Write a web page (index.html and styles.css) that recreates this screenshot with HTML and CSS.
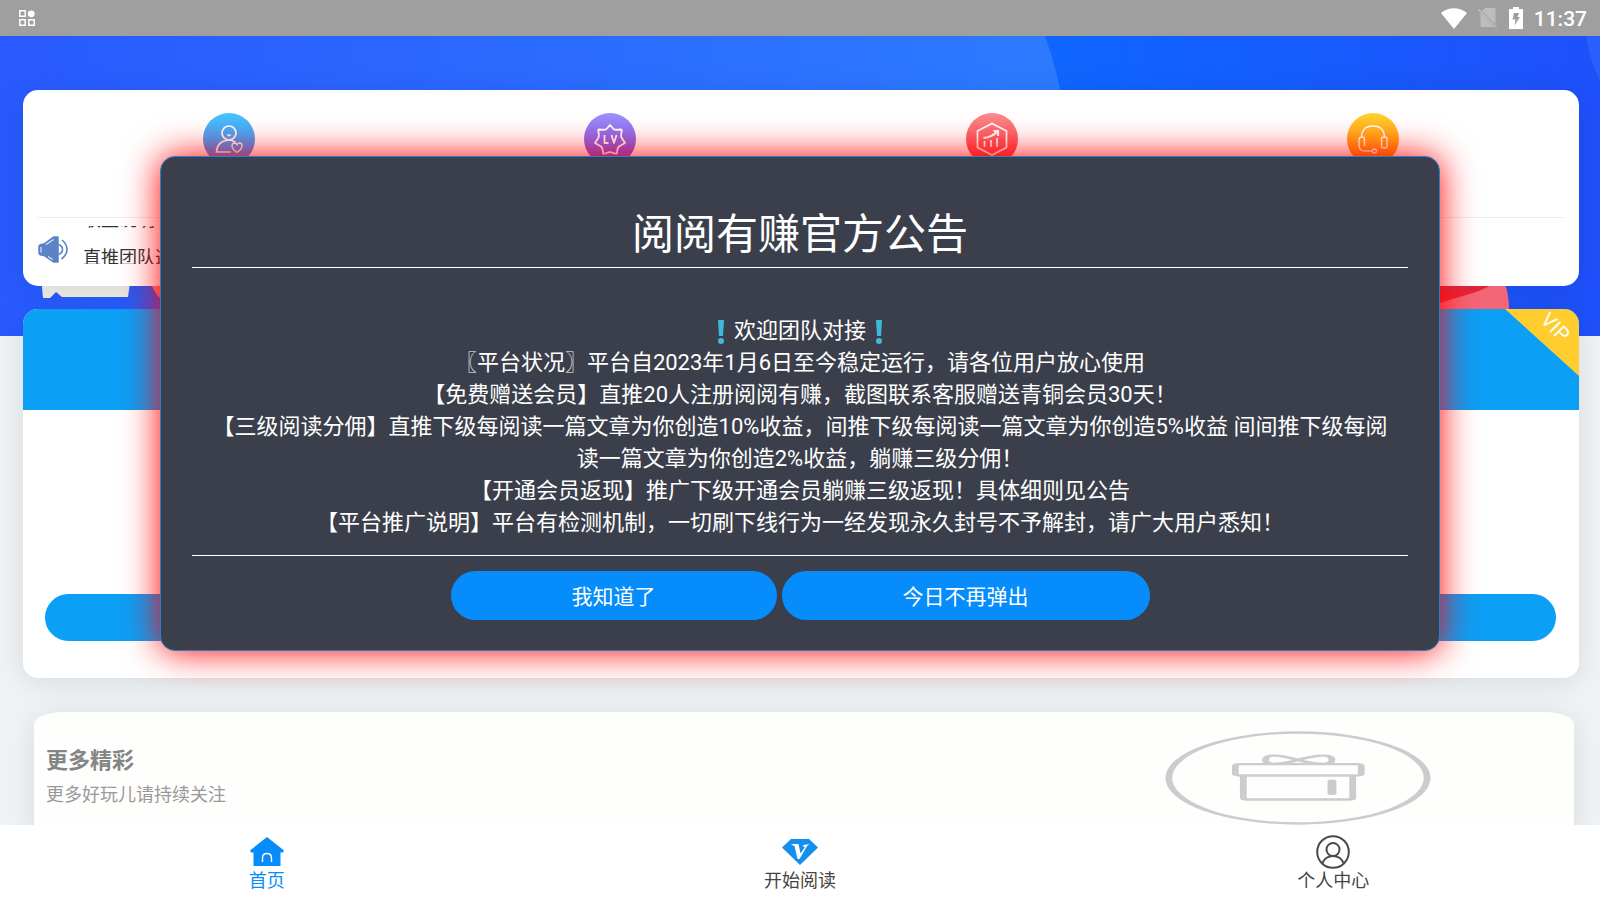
FILE: index.html
```
<!DOCTYPE html>
<html lang="zh-CN">
<head>
    <meta charset="utf-8">
    <meta name="viewport" content="width=device-width, initial-scale=1">
    <title>阅阅有赚</title>
    <link rel="stylesheet" href="styles.css">
</head>

<body>
    <header class="status-bar">
        <svg class="status-app" viewBox="0 0 16 16" width="16" height="16" fill="none" stroke="#fff" stroke-width="1.5">
            <path d="M.8.8h5.4v5.4H.8zM.8 9.8h5.4v5.4H.8zM9.8 9.8h5.4v5.4H9.8z"/>
            <circle cx="12.2" cy="3.8" r="3.4" fill="#fff" stroke="none"/>
        </svg>
        <div class="status-right">
            <svg viewBox="0 0 26 21" width="26" height="21"><path fill="#fff" d="M13 21 0 5C7-1.500 19-1.500 26 5z"/></svg>
            <svg viewBox="0 0 20 20" width="20" height="20">
                <path fill="#bdbdbd" d="M7 0h9q1.500 0 1.500 1.500V16L4 3zM2.500 5 16 19H4q-1.500 0-1.500-1.500z"/>
                <path stroke="#bdbdbd" stroke-width="1.600" d="M.5 1.500 18.500 19.500"/>
            </svg>
            <svg viewBox="0 0 14 22" width="14" height="22">
                <path fill="#fff" d="M4 0h6v2h4v20H0V2h4z"/>
                <path fill="#9e9e9e" d="M5 6h5L8.500 10H11L5.500 18.500 6.500 12.500H3.500z"/>
            </svg>
            <span class="clock">11:37</span>
        </div>
    </header>

    <main class="page">
        <svg class="hero" viewBox="0 0 1600 300" preserveAspectRatio="none">
            <defs>
                <linearGradient id="heroLeft"><stop offset="0" stop-color="#295aff"/><stop offset="1" stop-color="#2d7bff"/></linearGradient>
                <linearGradient id="heroRight" gradientUnits="userSpaceOnUse" x1="1050" x2="1600"><stop offset="0" stop-color="#0f66ff"/><stop offset="1" stop-color="#1f50fb"/></linearGradient>
            </defs>
            <rect width="1600" height="300" fill="url(#heroRight)"/>
            <path fill="url(#heroLeft)" d="M0 0H1045Q1070 70 1070 150T1040 300H0z"/>
            <path fill="#285fff" d="M1586 0h14v45Q1590 25 1586 0z"/>
            <path fill="#f0f0ea" d="M41 240h90l-3 21H62l-6-5-6 6h-7z"/>
            <path fill="#ff8d8d" d="M150 240h60v25h-45q-9-3-15-20z"/>
            <path fill="#ff6b7c" d="M1420 240h82q7 15 7 33h-89z"/>
            <path fill="#f0283c" d="M1420 240h82q-10 12-36 19l-46 14z"/>
            <path fill="#d93248" d="M1420 240h82q-16 10-50 14l-20 4z"/>
        </svg>

        <section class="card menu-card">
            <nav class="menu">
                <a href="#" class="menu-item blue" aria-label="邀请好友">
                    <svg viewBox="0 0 52 52" fill="none" stroke="#fff" stroke-width="1.700">
                        <circle cx="26" cy="20" r="7"/><path d="M23.500 21.500h5q-2.500 4-5 0z" fill="#fff" stroke="none"/>
                        <path stroke-linecap="round" d="M32 29q-3-2-6-2-12 1-12.500 12H27"/>
                        <path d="M34 39.500q-5-3.500-5-6.500 0-3 2.500-3 1.500 0 2.500 1.800 1-1.800 2.500-1.800 2.500 0 2.500 3 0 3-5 6.500z" stroke-width="1.300"/>
                    </svg>
                </a>
                <a href="#" class="menu-item purple" aria-label="会员等级">
                    <svg viewBox="0 0 52 52" fill="none" stroke="#fff" stroke-width="1.800" stroke-linejoin="round">
                        <path d="M26 12l4 4.500q1 .5 7 0 1 0 .7 1.500-1 5-.2 6.500l3.500 5.500-6 3.500q-2 2-2 7-2 .5-4-.7-3-1.300-6 0-2 1.200-4 .7 0-5-2-7l-6-3.500 3.500-5.500q.8-1.500-.2-6.500-.3-1.500.7-1.500 6 .5 7 0z"/>
                        <path d="M20.500 22v8h4M27.500 22l2.500 8 2.500-8"/>
                    </svg>
                </a>
                <a href="#" class="menu-item red" aria-label="收益排行">
                    <svg viewBox="0 0 52 52" fill="none" stroke="#fff" stroke-width="1.700">
                        <path d="M26 10.500 40.500 18v16.500L26 42 11.500 34.500V18z"/>
                        <path d="M18.500 28v6M25 27v7M31 25v9"/>
                        <path stroke-width="2.200" d="M17.500 25q9-1 13-6M27.500 18h4.500v5"/>
                    </svg>
                </a>
                <a href="#" class="menu-item orange" aria-label="联系客服">
                    <svg viewBox="0 0 52 52" fill="none" stroke="#fff" stroke-width="1.400">
                        <path d="M14.500 25q0-12 11.500-12t11.500 12"/>
                        <rect x="34.500" y="24" width="5.500" height="11" rx="2"/>
                        <path d="M17.500 33v-7q0-2-2.500-2-3 0-3 3v5q0 6 6 6h7"/>
                        <circle cx="27.500" cy="38" r="2"/>
                    </svg>
                </a>
            </nav>
            <div class="notice">
                <svg class="speaker" viewBox="0 0 30 28" width="30" height="28" fill="none" stroke="#5b83c6">
                    <path fill="#5b83c6" stroke-width="1.500" stroke-linejoin="round" d="M1 10.500q0-1.500 2-2L6 8 15.500 1H20V26h-4.500L6 19.500l-3-.5q-2-.5-2-2z"/>
                    <path stroke="#dfe8f6" stroke-width="1.200" d="M3 11v5.500M8 8.500 15.500 3.500M10 20.500l4.500 3"/>
                    <path stroke-width="1.600" d="M20.500 8.500q4 1.500 4 5t-4 5M24 4q5 4 5 9.500t-5.500 9.500"/>
                </svg>
                <ul class="ticker">
                    <li>收益说明</li>
                    <li>直推团队返现</li>
                </ul>
            </div>
        </section>

        <section class="card vip-card">
            <div class="vip-head">
                <span class="vip-corner"></span>
                <span class="vip-text">VIP</span>
            </div>
            <button type="button" class="vip-button" aria-label="开通会员"></button>
        </section>

        <section class="more-card">
            <div>
                <h2>更多精彩</h2>
                <p>更多好玩儿请持续关注</p>
            </div>
            <svg class="gift" viewBox="0 0 90 94" preserveAspectRatio="none" fill="none" stroke="#ccc" stroke-width="2.300">
                <ellipse cx="45" cy="47" rx="43.700" ry="45.500"/>
                <rect x="23.800" y="33.200" width="42.600" height="11.300" rx="1.500"/>
                <path d="M26.500 45v22q0 1.500 1.500 1.500h34q1.500 0 1.500-1.500V45"/>
                <path d="M45 29C40 25 34 21.500 34 29c0 6 6 4 11 0 5-4 11.500-7.500 11.500 0 0 6-6.500 4-11.500 0z"/>
                <path stroke-width="3" stroke-linecap="round" d="M56.500 50v12.500"/>
            </svg>
        </section>
    </main>

    <nav class="tab-bar">
        <a href="#" class="tab active">
            <svg viewBox="0 0 34 34" width="34" height="34">
                <path fill="#078cfb" d="M17 2 34 15.500 33 17.500H30.500V31h-27V17.500H1L0 15.500z"/>
                <path fill="none" stroke="#fff" stroke-width="1.400" d="M12.500 27v-4q0-4.500 4.500-4.500t4.500 4.500v4"/>
            </svg>
            <span>首页</span>
        </a>
        <a href="#" class="tab">
            <svg viewBox="0 0 36 34" width="36" height="34">
                <path fill="#158fee" d="M9 4h18l9 8.500L18 30 0 12.500z"/>
                <path fill="#fff" d="M9 9h7.500l2 9.500L23 12q-2-.5-2.500-1.500 2-1 7-1.500-2 1-3 3L17.500 24H15.500L12.500 11q-2-.5-3.500-2z"/>
            </svg>
            <span>开始阅读</span>
        </a>
        <a href="#" class="tab">
            <svg viewBox="0 0 34 34" width="34" height="34" fill="none" stroke="#4a4a4a" stroke-width="2">
                <circle cx="17" cy="17" r="15.800"/>
                <circle cx="17" cy="14.500" r="6.500"/>
                <path d="M6.500 28q3-7 10.500-7t10.500 7"/>
            </svg>
            <span>个人中心</span>
        </a>
    </nav>

    <div class="popup" role="dialog" aria-labelledby="popupTitle">
        <h1 id="popupTitle">阅阅有赚官方公告</h1>
        <div class="popup-text">
            <svg class="mark" viewBox="0 0 22 26"><path fill="#40b8dc" d="M8 1h6l-1 16H9z"/><circle cx="11" cy="22" r="3" fill="#40b8dc"/></svg>欢迎团队对接<svg class="mark" viewBox="0 0 22 26"><path fill="#40b8dc" d="M8 1h6l-1 16H9z"/><circle cx="11" cy="22" r="3" fill="#40b8dc"/></svg><br>
            〖平台状况〗平台自2023年1月6日至今稳定运行，请各位用户放心使用<br>
            【免费赠送会员】直推20人注册阅阅有赚，截图联系客服赠送青铜会员30天！<br>
            【三级阅读分佣】直推下级每阅读一篇文章为你创造10%收益，间推下级每阅读一篇文章为你创造5%收益 间间推下级每阅<br>读一篇文章为你创造2%收益，躺赚三级分佣！<br>
            【开通会员返现】推广下级开通会员躺赚三级返现！具体细则见公告<br>
            【平台推广说明】平台有检测机制，一切刷下线行为一经发现永久封号不予解封，请广大用户悉知！
        </div>
        <div class="popup-buttons">
            <button type="button">我知道了</button>
            <button type="button">今日不再弹出</button>
        </div>
    </div>
</body>

</html>
```
FILE: styles.css
```
* {
    box-sizing: border-box;
}

body {
    margin: 0;
    height: 100vh;
    display: flex;
    flex-direction: column;
    overflow: hidden;
    position: relative;
    background: #eff3f6;
    font-family: Roboto, "Noto Sans CJK SC", sans-serif;
    color: #333;
}

a {
    text-decoration: none;
}

.status-bar {
    height: 36px;
    flex: none;
    display: flex;
    align-items: center;
    justify-content: space-between;
    padding: 0 13px 0 19px;
    background: #9f9f9f;
}

.status-right {
    display: flex;
    align-items: center;
    gap: 11px;
}

.clock {
    color: #fff;
    font-size: 21px;
    line-height: 24px;
    font-weight: 500;
    padding-top: 2px;
}

.page {
    flex: 1;
    min-height: 0;
    position: relative;
    overflow: hidden;
    padding: 54px 21px 0 23px;
}

/* blue banner behind the cards */
.hero {
    position: absolute;
    top: 0;
    left: 0;
    width: 100%;
    height: 300px;
}

.card {
    position: relative;
    background: #fff;
    border-radius: 15px;
}

.card,
.more-card {
    box-shadow: 0 4px 30px rgba(0, 0, 0, 0.1);
}

.menu-card {
    padding: 23px 15px 0;
    margin-bottom: 23px;
}

.menu {
    display: grid;
    grid-template-columns: repeat(4, 1fr);
    justify-items: center;
    padding-bottom: 52px;
    border-bottom: 1px solid #eee;
}

.menu-item {
    width: 52px;
    height: 52px;
    border-radius: 50%;
}

.menu-item svg {
    display: block;
}

.blue {
    background: linear-gradient(#46c5ff, #3b7cf0);
}

.purple {
    background: linear-gradient(#9b92ff, #7040e0);
}

.red {
    background: linear-gradient(#fb8b8b, #f5323d);
}

.orange {
    background: linear-gradient(#ffd230, #ff7a00);
}

.notice {
    display: flex;
    align-items: flex-start;
    gap: 15px;
    height: 68px;
    padding-top: 8px;
}

.speaker {
    margin-top: 10px;
}

.ticker {
    list-style: none;
    margin: 0;
    padding: 0;
    height: 38px;
    overflow: hidden;
    font-size: 18px;
    line-height: 38px;
}

/* caught while scrolling from one row to the next */
.ticker li {
    height: 38px;
    transform: translateY(-25px);
}

.vip-card {
    overflow: hidden;
    padding-bottom: 37px;
    margin-bottom: 34px;
}

.vip-head {
    height: 101px;
    background: #0b9ff5;
    position: relative;
    margin-bottom: 184px;
}

.vip-corner {
    position: absolute;
    top: 0;
    right: 0;
    width: 74px;
    height: 67px;
    background: #ffcd2e;
    clip-path: polygon(0 0, 100% 0, 100% 100%);
}

.vip-text {
    position: absolute;
    top: 6px;
    right: 8px;
    color: #fff;
    font-size: 20px;
    line-height: 24px;
    transform: rotate(45deg);
}

.vip-button {
    display: block;
    width: calc(100% - 45px);
    height: 47px;
    margin: 0 22px;
    border: none;
    border-radius: 24px;
    background: #0b9ff5;
}

.more-card {
    position: relative;
    display: flex;
    justify-content: space-between;
    align-items: flex-start;
    margin: 0 5px 0 11px;
    padding: 19px 143px 20px 12px;
    background: #fefefd;
    border-radius: 30px / 12px;
}

.more-card h2 {
    margin: 13px 0 5px;
    font-size: 22px;
    line-height: 34px;
    color: #858585;
}

.more-card p {
    margin: 0;
    font-size: 18px;
    line-height: 24px;
    color: #999;
}

.gift {
    width: 266px;
    height: 94px;
}

.tab-bar {
    flex: none;
    height: 75px;
    display: flex;
    background: #fff;
    position: relative;
}

.tab {
    flex: 1;
    display: flex;
    flex-direction: column;
    align-items: center;
    padding-top: 10px;
    font-size: 18px;
    line-height: 24px;
    color: #444;
}

.tab.active {
    color: #078cfb;
}

.popup {
    position: absolute;
    top: 156px;
    left: 10%;
    right: 10%;
    padding: 54px 31px 30px;
    border: 1px solid #2c7fd0;
    border-radius: 15px;
    background: #3b3f4b;
    color: #fff;
    text-align: center;
    box-shadow: 0 0 36px #f00;
}

.popup h1 {
    margin: 0;
    padding-bottom: 8px;
    border-bottom: 1px solid #fff;
    font-size: 42px;
    line-height: 48px;
    font-weight: 400;
}

.popup-text {
    padding: 47px 0 16px;
    border-bottom: 1px solid #fff;
    font-size: 22px;
    line-height: 32px;
}

.mark {
    width: 22px;
    height: 26px;
    margin: 0 2px;
    vertical-align: middle;
}

.popup-buttons {
    display: flex;
    justify-content: center;
    gap: 5px;
    padding-top: 15px;
}

.popup-buttons button {
    height: 49px;
    padding: 0 121px 2px;
    border: none;
    border-radius: 25px;
    background: #078cfb;
    color: #fff;
    font-family: inherit;
    font-size: 21px;
    cursor: pointer;
}
```
